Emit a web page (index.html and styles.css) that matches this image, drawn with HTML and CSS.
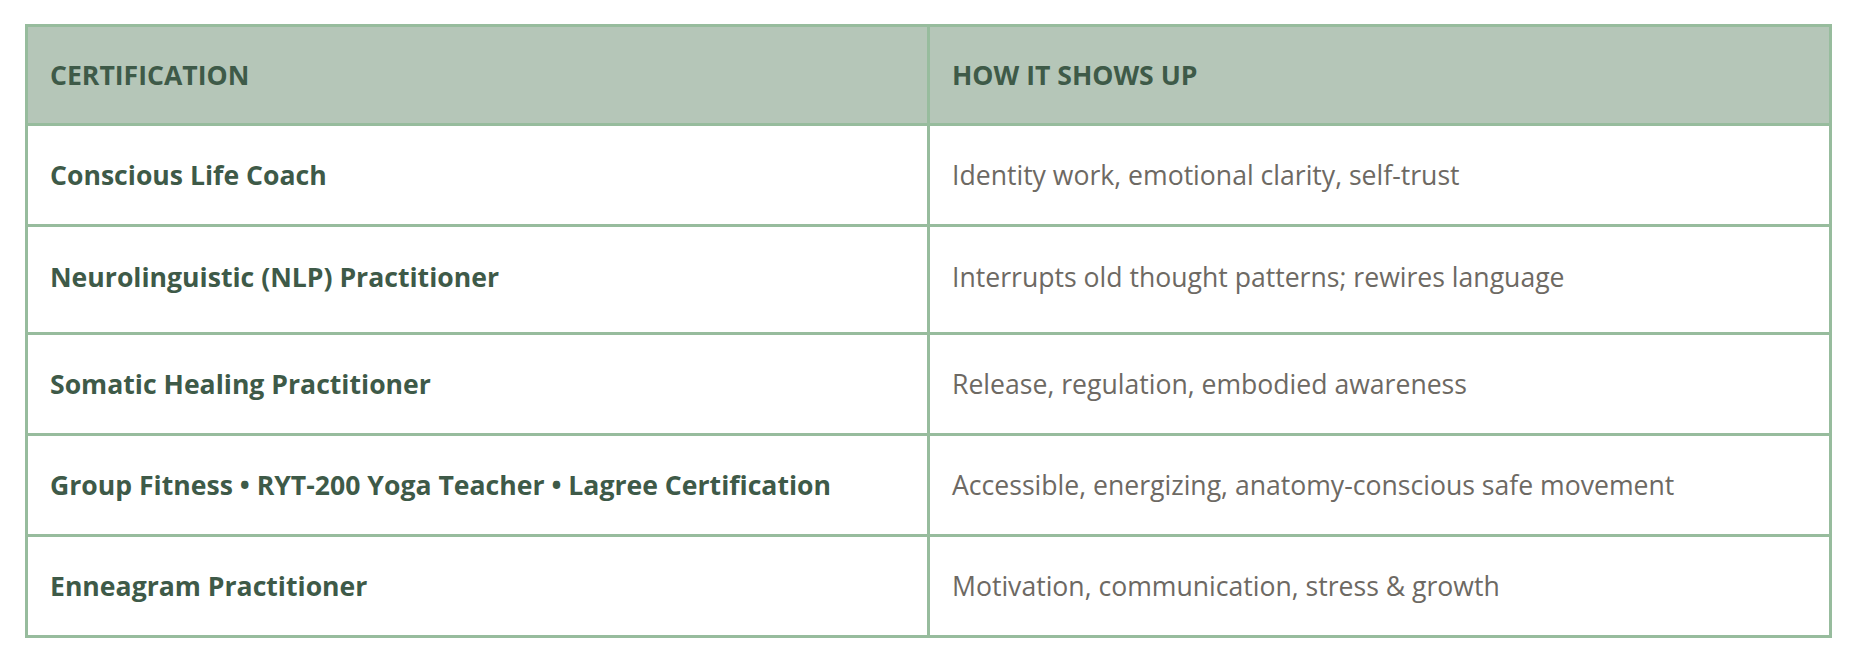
FILE: index.html
```html
<!DOCTYPE html>
<html lang="en">
<head>
<meta charset="utf-8">
<title>Certifications</title>
<link rel="stylesheet" href="styles.css">
</head>
<body>
<table class="cert-table">
  <thead>
    <tr>
      <th>Certification</th>
      <th>How it shows up</th>
    </tr>
  </thead>
  <tbody>
    <tr>
      <td class="name">Conscious Life Coach</td>
      <td class="desc">Identity work, emotional clarity, self-trust</td>
    </tr>
    <tr class="tall">
      <td class="name">Neurolinguistic (NLP) Practitioner</td>
      <td class="desc">Interrupts old thought patterns; rewires language</td>
    </tr>
    <tr>
      <td class="name">Somatic Healing Practitioner</td>
      <td class="desc">Release, regulation, embodied awareness</td>
    </tr>
    <tr>
      <td class="name">Group Fitness • RYT-200 Yoga Teacher • Lagree Certification</td>
      <td class="desc">Accessible, energizing, anatomy-conscious safe movement</td>
    </tr>
    <tr>
      <td class="name">Enneagram Practitioner</td>
      <td class="desc">Motivation, communication, stress &amp; growth</td>
    </tr>
  </tbody>
</table>
</body>
</html>
```
FILE: styles.css
```css
html, body {
  margin: 0;
  padding: 0;
  background: #ffffff;
}

body {
  padding: 24px 0 0 25px;
  font-family: "Open Sans", "Noto Sans", sans-serif;
}

.cert-table {
  width: 1807px;
  border-collapse: collapse;
  table-layout: fixed;
  border: 3px solid #97bc9d;
}

.cert-table th,
.cert-table td {
  width: 50%;
  border: 3px solid #97bc9d;
  padding: 0 22px;
  height: 98px;
  text-align: left;
  vertical-align: middle;
  font-size: 26.6px;
  line-height: 36px;
}

.cert-table th {
  height: 96px;
  background: #b5c6b8;
  color: #3e5a48;
  font-weight: 700;
  text-transform: uppercase;
}

.cert-table .name {
  color: #3e5a48;
  font-weight: 700;
}

.cert-table .desc {
  color: #6d6963;
  font-weight: 400;
}

.cert-table .tall td {
  height: 99px;
  padding-bottom: 6px;
}
```
